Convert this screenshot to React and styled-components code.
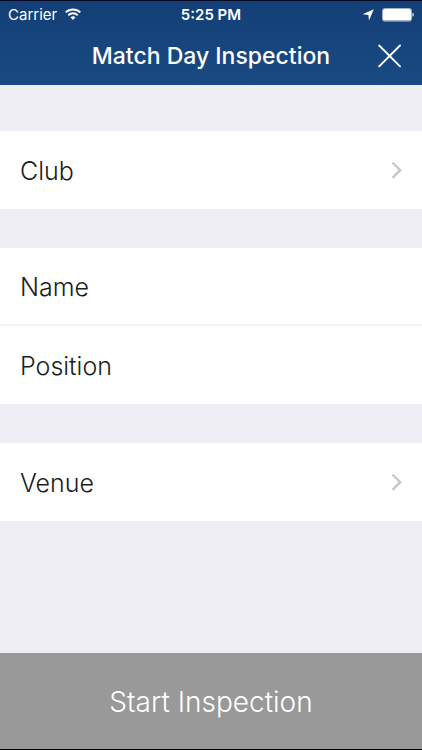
import React, { useState } from "react";
import styled, { createGlobalStyle } from "styled-components";

const GlobalStyle = createGlobalStyle`
    * {
        box-sizing: border-box;
    }
    body {
        margin: 0;
        background-color: #efeef5;
        font-family: Inter, "Liberation Sans", sans-serif;
    }
    button, input {
        margin: 0;
        border: 0;
        border-radius: 0;
        font-family: inherit;
    }
    button {
        cursor: pointer;
    }
`;

const Screen = styled.div`
    min-height: 100vh;
    display: flex;
    flex-direction: column;
    border-top: 1px solid #050a24;
    border-bottom: 1px solid #000;
`;

const Header = styled.header`
    height: 84px;
    color: white;
    background: linear-gradient(#133f76, #1a4a83);
`;

const StatusBar = styled.div`
    height: 28px;
    padding: 0 8px;
    display: grid;
    grid-template-columns: 1fr auto 1fr;
    align-items: center;
    font-size: 15px;
    line-height: 20px;
`;

const StatusGroup = styled.div`
    display: flex;
    align-items: center;
    gap: 8px;
    justify-content: ${props => props.$end ? "flex-end" : "flex-start"};
`;

const Time = styled.span`
    font-weight: 600;
`;

const NavBar = styled.div`
    height: 54px;
    padding: 0 12px;
    display: grid;
    grid-template-columns: 40px 1fr 40px;
    align-items: center;
`;

const Title = styled.h1`
    grid-column: 2;
    margin: 0;
    font-size: 23px;
    line-height: 32px;
    font-weight: 500;
    text-align: center;
    white-space: nowrap;
`;

const CloseButton = styled.button`
    height: 40px;
    padding: 0;
    display: flex;
    align-items: center;
    justify-content: center;
    color: inherit;
    background: none;
`;

const Form = styled.form`
    flex: 1;
    display: flex;
    flex-direction: column;
`;

const Fields = styled.div`
    flex: 1;
    padding: 46px 0;
    display: flex;
    flex-direction: column;
    gap: 39px;
`;

const Group = styled.div`
    background-color: white;
    > :not(:last-child) {
        border-bottom: 2px solid #f2f2f4;
    }
`;

const PickerRow = styled.button`
    width: 100%;
    height: 78px;
    padding: 2px 20px 0;
    display: flex;
    align-items: center;
    justify-content: space-between;
    background: none;
    color: #1c1c1c;
    font-size: 25px;
    font-weight: 300;
`;

const TextRow = styled.input`
    display: block;
    width: 100%;
    height: 78px;
    padding: 2px 20px 0;
    background: none;
    color: #1c1c1c;
    font-size: 25px;
    font-weight: 300;
    &::placeholder {
        color: #1c1c1c;
        opacity: 1;
    }
`;

const StartButton = styled.button`
    height: 96px;
    padding: 2px 0 0;
    color: white;
    background-color: #999;
    font-size: 28px;
    font-weight: 300;
`;

const WifiIcon = () => (
    <svg width="16" height="14" viewBox="0 0 16 14" aria-hidden="true">
        <path d="M.7 4.4a10.6 10.6 0 0 1 14.6 0M3.3 7.2a6.8 6.8 0 0 1 9.4 0" fill="none" stroke="currentColor" strokeWidth="1.9" />
        <path d="M5.5 9.3a3.8 3.8 0 0 1 5 0L8 11.9z" fill="currentColor" />
    </svg>
);

const LocationIcon = () => (
    <svg width="12" height="12" viewBox="0 0 12 12" aria-hidden="true">
        <path d="M11.8.2 7 11.5 6.4 5.9.6 5.3z" fill="currentColor" />
    </svg>
);

const BatteryIcon = () => (
    <svg width="32" height="14" viewBox="0 0 32 14" aria-hidden="true">
        <rect x=".5" y=".5" width="29" height="12.6" rx="2" fill="none" stroke="currentColor" opacity=".6" />
        <rect x="1" y="1" width="28" height="11.6" rx="1.5" fill="currentColor" />
        <path d="M30.5 4.8c1.7.7 1.7 3.3 0 4z" fill="currentColor" />
    </svg>
);

const CloseIcon = () => (
    <svg width="24" height="24" viewBox="0 0 24 24" aria-hidden="true">
        <path d="M1.2 1.5l20.8 20.8M22 1.5l-20.8 20.8" stroke="currentColor" strokeWidth="1.9" strokeLinecap="round" />
    </svg>
);

const Chevron = () => (
    <svg width="11" height="20" viewBox="0 0 11 20" aria-hidden="true">
        <path d="M1.5 1.5l7.7 7.7-7.7 7.7" fill="none" stroke="#c7c7cc" strokeWidth="2.4" />
    </svg>
);

export default () => {
    const [name, setName] = useState("");
    const [position, setPosition] = useState("");
    return (
        <>
            <GlobalStyle />
            <Screen>
                <Header>
                    <StatusBar>
                        <StatusGroup>
                            Carrier
                            <WifiIcon />
                        </StatusGroup>
                        <Time>5:25 PM</Time>
                        <StatusGroup $end>
                            <LocationIcon />
                            <BatteryIcon />
                        </StatusGroup>
                    </StatusBar>
                    <NavBar>
                        <Title>Match Day Inspection</Title>
                        <CloseButton type="button" aria-label="Close">
                            <CloseIcon />
                        </CloseButton>
                    </NavBar>
                </Header>
                <Form onSubmit={e => e.preventDefault()}>
                    <Fields>
                        <Group>
                            <PickerRow type="button">
                                Club
                                <Chevron />
                            </PickerRow>
                        </Group>
                        <Group>
                            <TextRow aria-label="Name" placeholder="Name" value={name} onChange={e => setName(e.target.value)} />
                            <TextRow aria-label="Position" placeholder="Position" value={position} onChange={e => setPosition(e.target.value)} />
                        </Group>
                        <Group>
                            <PickerRow type="button">
                                Venue
                                <Chevron />
                            </PickerRow>
                        </Group>
                    </Fields>
                    <StartButton>Start Inspection</StartButton>
                </Form>
            </Screen>
        </>
    )
}
